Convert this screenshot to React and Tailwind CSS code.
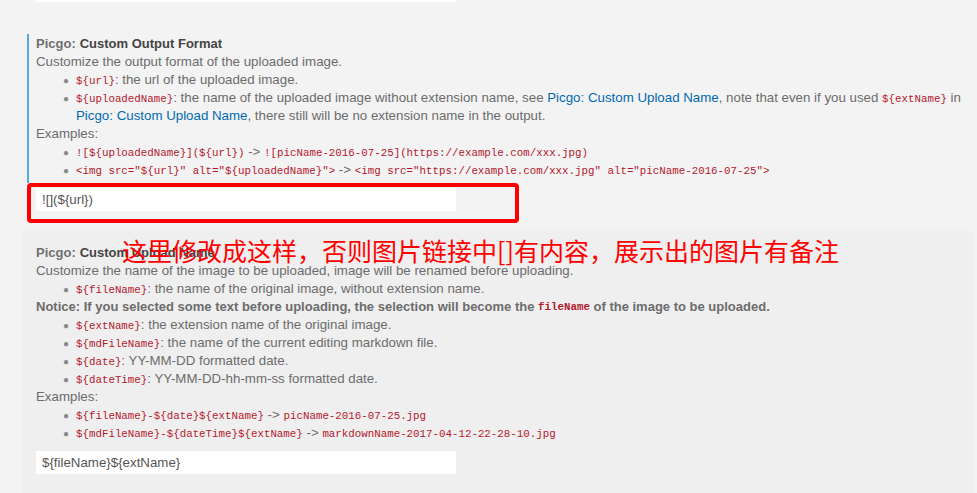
const sans = { fontFamily: '"Liberation Sans", "Noto Sans", sans-serif' };

function C({ children }) {
  return (
    <code className="text-[#b5182c] text-[10.8px] font-['Liberation_Mono',monospace]">{children}</code>
  );
}

function A({ children }) {
  return <span className="text-[#006ab1]">{children}</span>;
}

function Li({ children }) {
  return (
    <li className="flex h-[18px] items-center pl-[27px] whitespace-nowrap">
      <span className="w-[13px] shrink-0 text-[#8a8a8a] text-[10px]">●</span>
      <span>{children}</span>
    </li>
  );
}

function Title({ cat, name }) {
  return (
    <div className="h-[19px] flex items-center font-bold text-[13px]">
      <span className="text-[#6f6f6f]">{cat}</span>
      <span className="text-[#444] ml-[4px]">{name}</span>
    </div>
  );
}

export default function App() {
  return (
    <div className="relative w-[977px] h-[493px] overflow-hidden bg-[#f3f3f3] text-[13.3px] text-[#6c6c6c]" style={sans}>
      <div className="ml-[36px] w-[420px] h-[2px] bg-white" />

      {/* Custom Output Format (focused) */}
      <div className="mt-[32px] ml-[27px] border-l-2 border-[#55a8e0] pl-[7px] pb-[4px] w-[940px]">
        <Title cat="Picgo:" name="Custom Output Format" />
        <div className="h-[18px] flex items-center">Customize the output format of the uploaded image.</div>
        <ul>
          <Li><C>{"${url}"}</C>: the url of the uploaded image.</Li>
          <Li>
            <C>{"${uploadedName}"}</C>: the name of the uploaded image without extension name, see <A>Picgo: Custom Upload Name</A>, note that even if you used <C>{"${extName}"}</C> in
          </Li>
          <li className="h-[18px] flex items-center pl-[40px] whitespace-nowrap">
            <A>Picgo: Custom Upload Name</A>, there still will be no extension name in the output.
          </li>
        </ul>
        <div className="h-[18px] flex items-center">Examples:</div>
        <ul>
          <Li><C>{"![${uploadedName}](${url})"}</C> -&gt; <C>{"![picName-2016-07-25](https://example.com/xxx.jpg)"}</C></Li>
          <Li><C>{'<img src="${url}" alt="${uploadedName}">'}</C> -&gt; <C>{'<img src="https://example.com/xxx.jpg" alt="picName-2016-07-25">'}</C></Li>
        </ul>
      </div>
      <div className="ml-[27px] w-[492px] h-[40px] border-[4px] border-[#ff0000] rounded-[4px] pl-[5px] pt-[1px]">
        <div className="w-[420px] h-[23px] bg-white flex items-center pl-[6px] text-[#555]">![](${"{url}"})</div>
      </div>

      {/* Custom Upload Name (hovered) */}
      <div className="mt-[8px] ml-[22px] w-[952px] h-[300px] bg-[#efefef] pl-[14px] pt-[12px]">
        <Title cat="Picgo:" name="Custom Upload Name" />
        <div className="h-[18px] flex items-center">Customize the name of the image to be uploaded, image will be renamed before uploading.</div>
        <ul>
          <Li><C>{"${fileName}"}</C>: the name of the original image, without extension name.</Li>
        </ul>
        <div className="h-[18px] flex items-center font-bold text-[13px] whitespace-nowrap">
          Notice: If you selected some text before uploading, the selection will become the&nbsp;<C>fileName</C>&nbsp;of the image to be uploaded.
        </div>
        <ul>
          <Li><C>{"${extName}"}</C>: the extension name of the original image.</Li>
          <Li><C>{"${mdFileName}"}</C>: the name of the current editing markdown file.</Li>
          <Li><C>{"${date}"}</C>: YY-MM-DD formatted date.</Li>
          <Li><C>{"${dateTime}"}</C>: YY-MM-DD-hh-mm-ss formatted date.</Li>
        </ul>
        <div className="h-[18px] flex items-center">Examples:</div>
        <ul>
          <Li><C>{"${fileName}-${date}${extName}"}</C> -&gt; <C>picName-2016-07-25.jpg</C></Li>
          <Li><C>{"${mdFileName}-${dateTime}${extName}"}</C> -&gt; <C>markdownName-2017-04-12-22-28-10.jpg</C></Li>
        </ul>
        <div className="mt-[9px] w-[420px] h-[23px] bg-white flex items-center pl-[6px] text-[#555]">${"{fileName}"}${"{extName}"}</div>
      </div>

      {/* annotation */}
      <div
        className="absolute left-[122px] top-[233px] text-[25px] leading-[34px] text-[#ff0000] whitespace-nowrap"
        style={{ fontFamily: '"Noto Sans CJK SC", "Liberation Sans", sans-serif' }}
      >
        这里修改成这样，否则图片链接中[]有内容，展示出的图片有备注
      </div>
    </div>
  );
}
